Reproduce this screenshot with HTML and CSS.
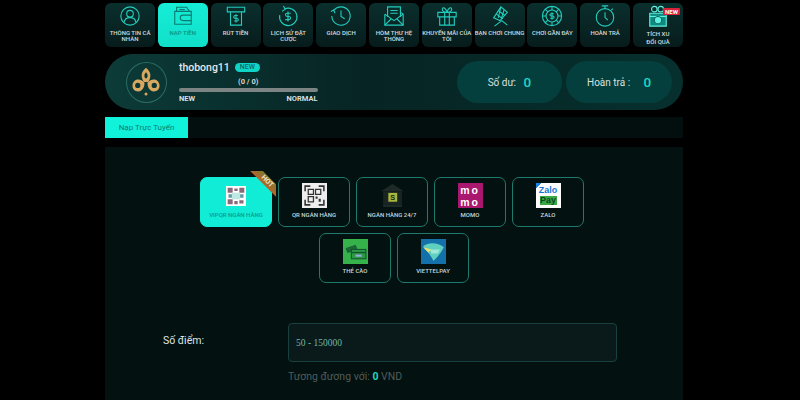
FILE: index.html
```html
<!DOCTYPE html>
<html lang="vi">
<head>
<meta charset="utf-8">
<title>Nap tien</title>
<link rel="stylesheet" href="styles.css">
</head>
<body>
<div class="wrap">

  <div class="menu">
    <div class="tile">
      <svg class="ico" viewBox="0 0 24 24"><circle cx="12" cy="12" r="10"/><circle cx="12" cy="9.500" r="3.600"/><path d="M5.500 19c.6-3.600 3-5.200 6.500-5.200s5.900 1.600 6.500 5.200"/></svg>
      <span>THÔNG TIN CÁ NHÂN</span>
    </div>
    <div class="tile on">
      <svg class="ico" viewBox="0 0 24 24"><path d="M5 7V2.500h11l3 4.500"/><path d="M8 5h6"/><path d="M3 7h18v14H3z"/><path d="M21 11h-9a2.500 2.500 0 0 0 0 6h9"/></svg>
      <span>NẠP TIỀN</span>
    </div>
    <div class="tile">
      <svg class="ico" viewBox="0 0 24 24"><path d="M2.500 2.500h19v5h-19z"/><path d="M6 7.500V22h12V7.500"/><path d="M14 11.500h-3a1.300 1.300 0 0 0 0 3h2a1.300 1.300 0 0 1 0 3h-3M12 10v9"/></svg>
      <span>RÚT TIỀN</span>
    </div>
    <div class="tile">
      <svg class="ico" viewBox="0 0 24 24"><path d="M8 4.500A9.500 9.500 0 1 1 3 11"/><path d="M7 1l2 3.500L5.500 7"/><path d="M15 9h-4a1.500 1.500 0 0 0 0 3.500h2a1.500 1.500 0 0 1 0 3.500H9M12 7v11"/></svg>
      <span>LỊCH SỬ ĐẶT CƯỢC</span>
    </div>
    <div class="tile">
      <svg class="ico" viewBox="0 0 24 24"><path d="M4 6a10 10 0 1 1-2 6"/><path d="M1 7l3-1.500L5.500 9"/><path d="M12 6v6.500l4 2.500"/></svg>
      <span>GIAO DỊCH</span>
    </div>
    <div class="tile">
      <svg class="ico" viewBox="0 0 24 24"><path d="M2 10v12h20V10l-3-2"/><path d="M5 13V2h14v11"/><path d="M8 6h8M8 9h8"/><path d="M2 10l10 7 10-7M2 22l7-7M22 22l-7-7"/></svg>
      <span>HÒM THƯ HỆ THỐNG</span>
    </div>
    <div class="tile">
      <svg class="ico" viewBox="0 0 24 24"><path d="M2 8h20v5H2zM4 13v9h16v-9"/><path d="M9.500 8v14M14.500 8v14"/><path d="M12 8C9 8 6 6.500 7 4s4 0 5 4c1-4 4-6.500 5-4s-2 4-5 4z"/></svg>
      <span>KHUYẾN MÃI CỦA TÔI</span>
    </div>
    <div class="tile">
      <svg class="ico" viewBox="0 0 24 24"><path d="M5 14L13 2l7 6-8 9z"/><path d="M8 10l7 5M10.500 6.500l7 5M13 2l-3 12M16.500 5l-3 10"/><path d="M6 23l8-6 6 5"/></svg>
      <span>BẠN CHƠI CHUNG</span>
    </div>
    <div class="tile">
      <svg class="ico" viewBox="0 0 24 24"><circle cx="12" cy="12" r="10.500"/><circle cx="12" cy="12" r="6.500"/><path d="M12 1.500v4M12 18.500v4M1.500 12h4M18.500 12h4M4.600 4.600l2.800 2.800M16.600 16.600l2.800 2.800M4.600 19.400l2.800-2.800M16.600 7.400l2.800-2.800"/><path d="M14 9.500h-3a1.200 1.200 0 0 0 0 2.500h2a1.200 1.200 0 0 1 0 2.500h-3M12 8v8"/></svg>
      <span>CHƠI GẦN ĐÂY</span>
    </div>
    <div class="tile">
      <svg class="ico" viewBox="0 0 24 24"><circle cx="12" cy="13.500" r="9.500"/><path d="M12 4V1.500M8.500 1h7M19 5.500l1.500-1.500"/><path d="M12 8v5.500l3 3"/></svg>
      <span>HOÀN TRẢ</span>
    </div>
    <div class="tile gift">
      <svg class="ico" viewBox="0 0 24 24"><path d="M3 9h18v14H3z" class="fill"/><circle cx="8" cy="4.500" r="3"/><circle cx="15" cy="4.500" r="3"/><path d="M3 12.500h18"/><circle cx="12" cy="16.500" r="4" class="coin"/></svg>
      <b class="hot">NEW</b>
      <span>TÍCH XU<br>ĐỔI QUÀ</span>
    </div>
  </div>

  <div class="profile">
    <div class="avatar">
      <svg viewBox="0 0 40 40" width="30" height="30">
        <path class="gold" d="M20 1c6 5 8 11 3 19h-6C12 12 14 6 20 1z"/>
        <path class="gold" d="M18 21C12 14 3 16 2 24c-1 7 7 11 12 7 3-2 4-6 4-10z"/>
        <path class="gold" d="M22 21c6-7 15-5 16 3 1 7-7 11-12 7-3-2-4-6-4-10z"/>
        <path class="hole" d="M20 7c2.500 2.500 3 5 1 8h-2c-2-3-1.500-5.500 1-8z"/>
        <circle class="hole" cx="9" cy="24.500" r="3.500"/>
        <circle class="hole" cx="31" cy="24.500" r="3.500"/>
        <circle class="gold" cx="20" cy="36" r="2"/>
      </svg>
    </div>
    <div class="who">
      <div class="nameline"><span class="uname">thobong11</span><span class="badge">NEW</span></div>
      <div class="count">(0 / 0)</div>
      <div class="bar"></div>
      <div class="ends"><span>NEW</span><span>NORMAL</span></div>
    </div>
    <div class="pill">Số dư: <em>0</em></div>
    <div class="pill">Hoàn trả : <em class="far">0</em></div>
  </div>

  <div class="tabs"><div class="tab">Nạp Trực Tuyến</div></div>

  <div class="panel">
    <div class="methods">
      <div class="card sel">
        <svg class="logo small" viewBox="0 0 24 24"><rect width="24" height="24" fill="#fff"/><path d="M2 2h6v6H2zM16 2h6v6h-6zM2 16h6v6H2zM10 3h4v3h-4zM16 17h5v4h-5zM10 18h4v4h-4z" fill="#8a6a78"/><path d="M3 10h5v4H3zM16 10h5v4h-5z" fill="#5e9aa0"/><rect x="7" y="8" width="10" height="8" fill="#bfe8e2"/></svg>
        <span>VIPQR NGÂN HÀNG</span>
        <div class="ribbon"><i>HOT</i></div>
      </div>
      <div class="card">
        <svg class="logo" viewBox="0 0 24 24"><rect width="24" height="24" fill="#eee"/><path d="M3 8V3h5M16 3h5v5M21 16v5h-5M8 21H3v-5" fill="none" stroke="#333" stroke-width="1.500"/><path d="M6 6h5v5H6zM13 6h5v5h-5zM6 13h5v5H6z" fill="none" stroke="#333" stroke-width="1.200"/><path d="M13 13h2v2h-2zM16 15h2v3h-2z" fill="#333"/></svg>
        <span>QR NGÂN HÀNG</span>
      </div>
      <div class="card">
        <svg class="logo" viewBox="0 0 24 24"><path d="M12 1L1 8h22zM3 21h18v2H3z" fill="#1d2a28"/><rect x="3" y="8" width="18" height="13" fill="#1a2523"/><rect x="8" y="9.500" width="8.500" height="8.500" fill="#a5b83c"/><text x="12.200" y="16.500" font-size="7" text-anchor="middle" fill="#1a2523" font-family="Liberation Sans" font-weight="700">S</text></svg>
        <span>NGÂN HÀNG 24/7</span>
      </div>
      <div class="card">
        <div class="logo momo">mo<br>mo</div>
        <span>MOMO</span>
      </div>
      <div class="card">
        <div class="logo zalo"><b>Zalo</b><u>Pay</u></div>
        <span>ZALO</span>
      </div>
    </div>
    <div class="methods two">
      <div class="card">
        <svg class="logo" viewBox="0 0 24 24"><rect width="24" height="24" fill="#35b34a"/><path d="M3 9l9-3 1.500 4-9 3z" fill="#1d6b34" stroke="#144" stroke-width=".6"/><rect x="8" y="10" width="14" height="9" fill="#2c9a45" stroke="#14532d" stroke-width="1"/><path d="M8 13h14" stroke="#14532d" stroke-width="1.200"/><rect x="12" y="15" width="6" height="2" fill="#9ad"/></svg>
        <span>THẺ CÀO</span>
      </div>
      <div class="card">
        <svg class="logo" viewBox="0 0 24 24"><rect width="24" height="24" fill="#1470a8"/><path d="M2 7c5-4 14-4 20 1l-3 5c-3 4-5 6-7 8-2-4-5-8-10-14z" fill="#5fd0c0"/><path d="M2 8l8 2-3 3z" fill="#e9e36a"/><path d="M9 10h9l-2 4H10z" fill="#9fe8d8"/></svg>
        <span>VIETTELPAY</span>
      </div>
    </div>

    <div class="form-row">
      <div class="lbl">Số điểm:</div>
      <div class="field">
        <div class="inp">50 - 150000</div>
        <div class="hint">Tương đương với: <em>0</em> VND</div>
      </div>
    </div>
  </div>

</div>
</body>
</html>
```

FILE: styles.css
```css
html, body{margin:0; height:400px; overflow:hidden; background:#000;}
body{font-family:Roboto, "Liberation Sans", sans-serif; color:#e6e6e6;}
.wrap{width:578px; margin-left:105px; padding-top:3px;}

/* top menu */
.menu{display:flex; gap:2.800px;}
.tile{position:relative; flex:1; min-width:0; height:44px; box-sizing:border-box; padding-top:1.500px; border-radius:6px;
  background:linear-gradient(#0a2f2d, #071c1c); text-align:center;
  font-size:6px; line-height:6.500px; font-weight:500; color:#d5dedd;}
.tile span{display:block; margin:3px -1px 0;}
.tile.on{background:linear-gradient(#16edd6, #10e0ca); color:#0b8f86;}
.ico{display:block; width:22px; height:22px; margin:0 auto; fill:none; stroke:#22cdbd; stroke-width:1.200;}
.on .ico{stroke:#0a7a72;}
.gift span{margin-top:3.500px; line-height:8px;}
.gift .ico{stroke:#5ff0e0;}
.gift .fill{fill:#0e8a80;}
.gift .coin{fill:#5ff0e0; stroke:#0e6a62;}
.hot{position:absolute; top:5px; right:3px; padding:0 2px; background:#d8233a; color:#fff; font-size:6px; line-height:7px; font-weight:700; border-radius:1px;}

/* profile */
.profile{display:flex; align-items:center; height:56px; margin-top:7px; padding:0 11px 0 21px;
  border-radius:28px; background:linear-gradient(90deg, #0c3b38, #062423 45%, #06302e);}
.avatar{display:flex; align-items:center; justify-content:center; width:41px; height:41px; box-sizing:border-box; border:1px solid #2b6d63; border-radius:50%;}
.gold{fill:#d8a860;}
.hole{fill:#0a3733;}
.who{width:139px; margin:0 139px 0 12px;}
.nameline{display:flex; align-items:center; gap:5px;}
.uname{font-size:10.500px; font-weight:500; color:#e8e8e8;}
.badge{padding:0 5px; border-radius:6px; background:#10d4c6; color:#0b6a66; font-size:7px; line-height:9px; font-weight:500;}
.count{margin-top:3px; text-align:center; font-size:7.500px; line-height:9px; font-weight:700; color:#cfd8d7;}
.bar{height:4px; margin-top:2px; border-radius:2px; background:#7d8584;}
.ends{display:flex; justify-content:space-between; margin-top:2px; font-size:7.500px; line-height:10px; font-weight:700; color:#d8dfde;}
.pill{display:flex; align-items:center; justify-content:center; gap:5px; width:106px; height:42px; margin-right:4px; border-radius:21px; background:#053f3d; font-size:10px; color:#d8e0df; white-space:pre;}
.pill:last-child{margin-right:0;}
.pill em{font-style:normal; font-weight:500; font-size:13.500px; color:#1ed6c8;}
.pill em.far{margin-left:6px;}

/* tab row */
.tabs{height:21px; margin-top:7px; background:#020f0e;}
.tab{width:83px; height:21px; background:#10f2da; color:#0d7d75; font-size:8px; line-height:21px; text-align:center;}

/* panel */
.panel{height:253px; margin-top:9px; background:#031110; padding-top:30px; box-sizing:border-box;}
.methods{display:flex; gap:6px; width:388px; margin-left:95px;}
.methods.two{justify-content:center; margin-top:6px;}
.card{position:relative; width:72px; height:50px; box-sizing:border-box; border:1px solid #1d7a6c; border-radius:7px; text-align:center; font-size:6px; font-weight:500; color:#d0d8d7; padding-top:5px;}
.card span{display:block; margin-top:3px; line-height:8px;}
.card.sel{border-color:#10ecd5; background:#10ecd5; color:#0a9a90;}
.logo{display:block; width:25px; height:25px; margin:0 auto;}
.logo.small{width:20px; height:20px; padding:3px 0 2px;}
.momo{background:#a9176f; color:#fff; padding-top:1px; box-sizing:border-box; font-size:10.500px; line-height:12px; letter-spacing:2px; font-weight:700; font-family:"Liberation Sans", sans-serif;}
.zalo{background:linear-gradient(135deg, #1b86e0 12%, #fff 12%); font-family:"Liberation Sans", sans-serif; font-size:9px; line-height:9px; padding-top:3px; box-sizing:border-box;}
.zalo b{display:block; color:#1b75d0;}
.zalo u{display:block; margin:1px 4px 0; background:#3aa845; color:#0b4a23; text-decoration:none; font-weight:700;}
.ribbon{position:absolute; top:-7px; right:-5px; width:28px; height:28px; overflow:hidden;}
.ribbon i{position:absolute; top:6px; left:0; width:38px; transform:rotate(45deg); background:linear-gradient(#7c7a33, #b5632b); color:#f2e6c8; font-size:7px; line-height:9px; font-style:normal; font-weight:700;}

/* amount */
.form-row{display:flex; margin-top:40px;}
.lbl{width:125px; margin-left:58px; padding-top:11px; font-size:10.500px; line-height:14px; color:#dfe5e4;}
.field{width:329px;}
.inp{height:39px; box-sizing:border-box; padding-left:7px; border:1px solid #17403e; border-radius:4px; background:#0a1a1b; font-family:"Liberation Serif", serif; font-size:9.500px; line-height:38px; color:#6fb8a8;}
.hint{margin-top:8px; font-size:10.500px; line-height:13px; color:#4e5c5b;}
.hint em{font-style:normal; font-weight:700; color:#1ed6c8;}
```
